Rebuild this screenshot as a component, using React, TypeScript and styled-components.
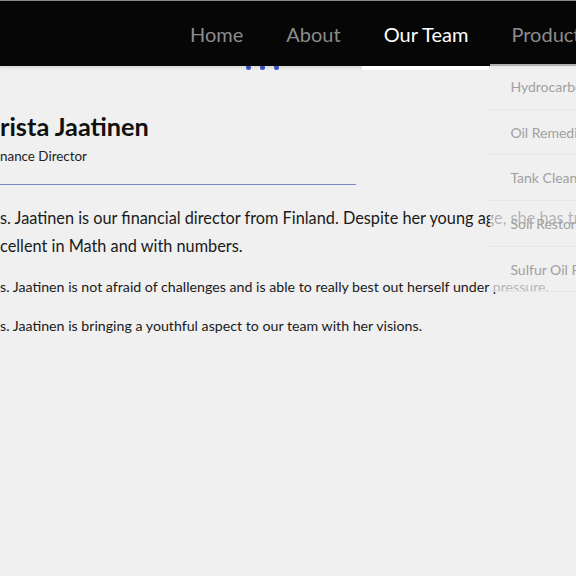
import React from "react";
import styled, { createGlobalStyle } from "styled-components";

const GlobalStyle = createGlobalStyle`
  html, body {
    margin: 0;
    padding: 0;
    background: #f0f0f0;
    overflow: hidden;
  }
  body {
    font-family: Lato, "Open Sans", sans-serif;
    width: 576px;
    height: 576px;
  }
`;

const Page = styled.div`
  width: 576px;
  height: 576px;
  overflow: hidden;
  position: relative;
`;

const Header = styled.header`
  height: 65px;
  background: #060606;
  border-top: 1px solid #8a8a8a;
  display: flex;
  padding-left: 168px;
  box-shadow: 0 2px 3px rgba(0, 0, 0, 0.1);
  position: relative;
  z-index: 2;
`;

const NavItem = styled.div<{ $active?: boolean }>`
  position: relative;
  padding: 0 21px 0 22px;
  display: flex;
  align-items: center;
  white-space: nowrap;
  font-size: 20px;
  color: ${(p) => (p.$active ? "#ffffff" : "#8c8c8c")};
  &::after {
    content: "";
    display: ${(p) => (p.$active ? "block" : "none")};
    position: absolute;
    left: 0;
    right: 0;
    bottom: -4px;
    height: 4px;
    background: #ffffff;
  }
`;

const Dropdown = styled.ul`
  position: absolute;
  top: 63px;
  left: 1px;
  width: 200px;
  margin: 0;
  padding: 0;
  list-style: none;
  background: rgba(240, 240, 240, 0.72);
`;

const DropItem = styled.li`
  height: 45.7px;
  box-sizing: border-box;
  display: flex;
  align-items: center;
  padding-left: 20px;
  font-size: 14px;
  color: #a0a0a0;
  border-bottom: 1px solid #e6e6e6;
  white-space: nowrap;
`;

const Dots = styled.div`
  position: absolute;
  top: 65px;
  left: 246px;
  display: flex;
  gap: 9px;
  z-index: 1;
`;

const Dot = styled.span`
  width: 5px;
  height: 5px;
  border-radius: 50%;
  background: #3a55c8;
`;

const Content = styled.main`
  padding-top: 45px;
  display: flex;
  flex-direction: column;
  position: relative;
  z-index: 0;
`;

const Name = styled.h2`
  margin: 0;
  font-size: 25.3px;
  line-height: 30px;
  font-weight: 700;
  color: #111;
  white-space: nowrap;
`;

const Role = styled.div`
  font-size: 13.4px;
  line-height: 20px;
  margin-top: 5px;
  color: #222;
`;

const Rule = styled.hr`
  width: 356px;
  margin: 18px 0 0 0;
  border: none;
  border-top: 1px solid #7d89bd;
`;

const Para = styled.p<{ $size: number; $gap: number }>`
  margin: ${(p) => p.$gap}px 0 0 0;
  font-size: ${(p) => p.$size}px;
  line-height: 28px;
  color: #1a1a1a;
  white-space: nowrap;
`;

export default function App() {
  const products = [
    "Hydrocarbon Treatment",
    "Oil Remediation",
    "Tank Cleaning",
    "Soil Restoration",
    "Sulfur Oil Removal",
  ];
  return (
    <Page>
      <GlobalStyle />
      <Header>
        <NavItem>Home</NavItem>
        <NavItem>About</NavItem>
        <NavItem $active>Our Team</NavItem>
        <NavItem>
          Products
          <Dropdown>
            {products.map((p) => (
              <DropItem key={p}>{p}</DropItem>
            ))}
          </Dropdown>
        </NavItem>
      </Header>
      <Dots>
        <Dot />
        <Dot />
        <Dot />
      </Dots>
      <Content>
        <Name>rista Jaatinen</Name>
        <Role>nance Director</Role>
        <Rule />
        <Para $size={16.3} $gap={19}>
          s. Jaatinen is our financial director from Finland. Despite her young age, she has trained to be
          <br />
          cellent in Math and with numbers.
        </Para>
        <Para $size={14.2} $gap={13}>
          s. Jaatinen is not afraid of challenges and is able to really best out herself under pressure.
        </Para>
        <Para $size={14.2} $gap={11}>
          s. Jaatinen is bringing a youthful aspect to our team with her visions.
        </Para>
      </Content>
    </Page>
  );
}
